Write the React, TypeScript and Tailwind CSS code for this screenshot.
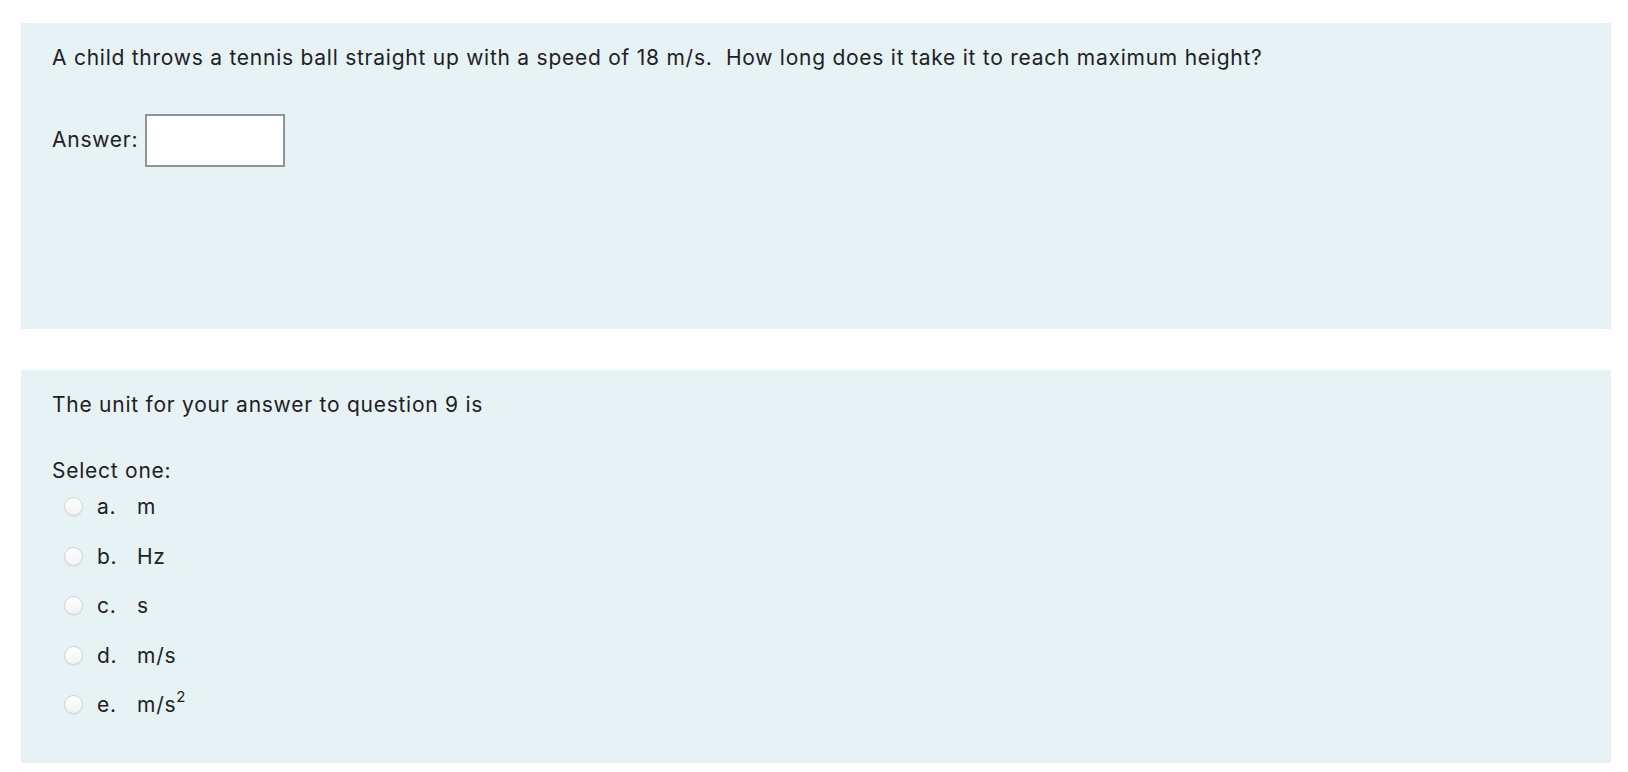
import React from "react";

const options = [
  { key: "a", label: "m" },
  { key: "b", label: "Hz" },
  { key: "c", label: "s" },
  { key: "d", label: "m/s" },
  { key: "e", label: "m/s", sup: "2" },
];

export default function App() {
  return (
    <div
      className="min-h-screen w-full bg-white pl-[21px] pr-[17px] pt-[23px] text-[21px] leading-[1.5] tracking-[0.75px] text-[#1d2125]"
      style={{ fontFamily: "Inter, 'Noto Sans', sans-serif" }}
    >
      <section className="h-[306px] bg-[#e7f2f4] px-[31px] pt-[19px]">
        <p>A child throws a tennis ball straight up with a speed of 18 m/s.&nbsp; How long does it take it to reach maximum height?</p>
        <div className="mt-[40px] flex items-center gap-[7px]">
          <label>Answer:</label>
          <input
            type="text"
            className="h-[53px] w-[140px] border-2 border-[#8f959e] bg-white outline-none"
          />
        </div>
      </section>

      <section className="mt-[41px] bg-[#e7f2f4] px-[31px] pt-[19px] pb-[42px]">
        <p>The unit for your answer to question 9 is</p>
        <p className="mt-[34px]">Select one:</p>
        <div className="mt-[5px] flex flex-col gap-[18px] pl-[12px]">
          {options.map((o) => (
            <div key={o.key} className="flex h-[31.5px] items-center">
              <span className="h-[19px] w-[19px] shrink-0 rounded-full border border-[#cfd3d7] bg-gradient-to-b from-white to-[#f2f2f2] shadow-[0_1px_1px_rgba(0,0,0,0.06)]" />
              <span className="ml-[14px] w-[40px]">{o.key}.</span>
              <span>
                {o.label}
                {o.sup && <sup className="relative -top-[10px] text-[15px]">{o.sup}</sup>}
              </span>
            </div>
          ))}
        </div>
      </section>
    </div>
  );
}
